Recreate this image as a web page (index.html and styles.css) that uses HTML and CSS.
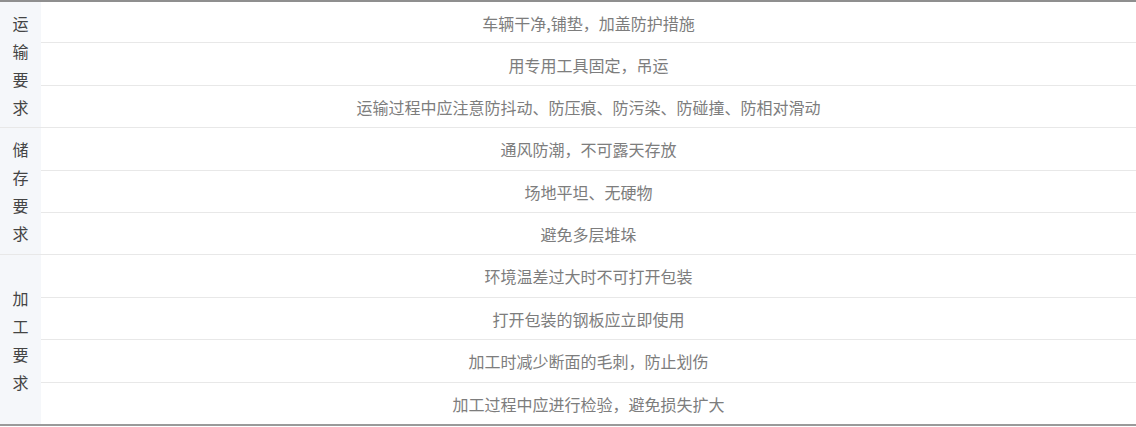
FILE: index.html
```html
<!DOCTYPE html>
<html lang="zh-CN">
<head>
<meta charset="utf-8">
<title>要求</title>
<link rel="stylesheet" href="styles.css">
</head>
<body>
<div class="table">
  <div class="group">
    <div class="label"><span>运输要求</span></div>
    <div class="rows">
      <div class="row">车辆干净,铺垫，加盖防护措施</div>
      <div class="row">用专用工具固定，吊运</div>
      <div class="row">运输过程中应注意防抖动、防压痕、防污染、防碰撞、防相对滑动</div>
    </div>
  </div>
  <div class="group">
    <div class="label"><span>储存要求</span></div>
    <div class="rows">
      <div class="row">通风防潮，不可露天存放</div>
      <div class="row">场地平坦、无硬物</div>
      <div class="row">避免多层堆垛</div>
    </div>
  </div>
  <div class="group">
    <div class="label"><span>加工要求</span></div>
    <div class="rows">
      <div class="row">环境温差过大时不可打开包装</div>
      <div class="row">打开包装的钢板应立即使用</div>
      <div class="row">加工时减少断面的毛刺，防止划伤</div>
      <div class="row">加工过程中应进行检验，避免损失扩大</div>
    </div>
  </div>
</div>
</body>
</html>
```

FILE: styles.css
```css
html, body {
  margin: 0;
  padding: 0;
  background: #ffffff;
}

body {
  font-family: "Noto Sans CJK SC", "Noto Sans", sans-serif;
  font-size: 16px;
}

.table {
  border-top: 2px solid #8f8f8f;
  border-bottom: 2px solid #9a9a9a;
}

.group {
  display: flex;
}

.group + .group {
  border-top: 1px solid #e8e8e8;
}

.label {
  width: 41px;
  flex: none;
  background: #f5f7fa;
  display: flex;
  align-items: center;
  justify-content: center;
  color: #444444;
}

.label span {
  width: 1em;
  line-height: 28px;
}

.rows {
  flex: 1;
  display: flex;
  flex-direction: column;
}

.row {
  box-sizing: border-box;
  height: 41.4px;
  display: flex;
  align-items: center;
  justify-content: center;
  color: #7d7d7d;
}

.group:first-child .row:first-child {
  height: 40.4px;
  padding-top: 1px;
}

.row + .row {
  border-top: 1px solid #e8e8e8;
  height: 42.4px;
  padding-top: 1px;
}
```
